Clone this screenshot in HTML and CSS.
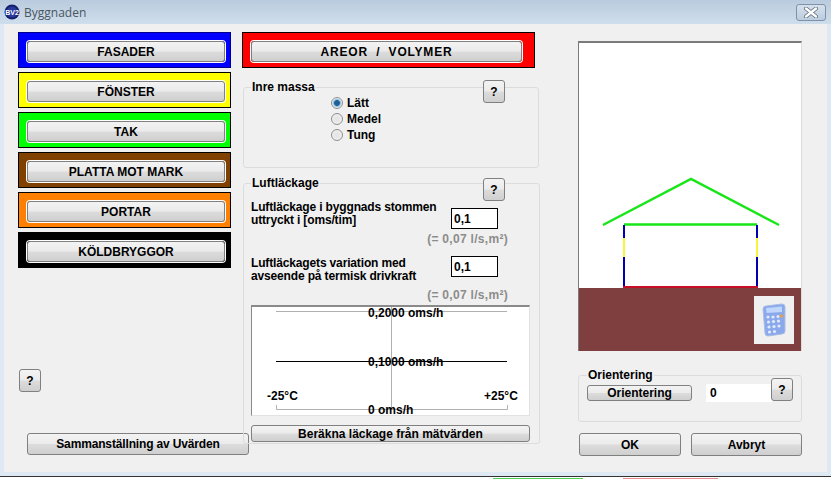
FILE: index.html
```html
<!DOCTYPE html>
<html lang="sv">
<head>
    <meta charset="UTF-8">
    <title>Byggnaden</title>
    <link rel="stylesheet" href="styles.css">
</head>
<body>
    <div class="window">
        <!-- Titelrad -->
        <div class="titlebar">
            <svg class="app-icon" width="16" height="16" viewBox="0 0 16 16">
                <circle cx="8" cy="8" r="7.5" fill="#14206e"/>
                <circle cx="8" cy="8" r="5.5" fill="#2a3a9a"/>
                <text x="8" y="10.5" font-size="7" font-weight="bold" text-anchor="middle" fill="#ffffff" font-family="Liberation Sans, sans-serif">BV2</text>
            </svg>
            <span class="title">Byggnaden</span>
            <div class="close-btn">
                <svg width="16" height="11" viewBox="0 0 16 11">
                    <path d="M3 1.5 L13 9.5 M13 1.5 L3 9.5" stroke="#5f6b78" stroke-width="4" stroke-linecap="round"/>
                    <path d="M3 1.5 L13 9.5 M13 1.5 L3 9.5" stroke="#ffffff" stroke-width="2.4" stroke-linecap="round"/>
                </svg>
            </div>
        </div>

        <div class="content">
            <!-- Vänster kolumn -->
            <div class="col-left">
                <div class="color-box blue"><button class="btn">FASADER</button></div>
                <div class="color-box yellow"><button class="btn">FÖNSTER</button></div>
                <div class="color-box green"><button class="btn">TAK</button></div>
                <div class="color-box brown"><button class="btn">PLATTA MOT MARK</button></div>
                <div class="color-box orange"><button class="btn">PORTAR</button></div>
                <div class="color-box black"><button class="btn">KÖLDBRYGGOR</button></div>
                <button class="btn help help-left">?</button>
                <button class="btn summary-btn">Sammanställning av Uvärden</button>
            </div>

            <!-- Mittenkolumn -->
            <div class="col-mid">
                <div class="color-box red"><button class="btn wide-btn">AREOR &nbsp;/&nbsp; VOLYMER</button></div>

                <fieldset class="group mass-group">
                    <legend>Inre massa</legend>
                    <button class="btn help help-corner">?</button>
                    <div class="radio-list">
                        <div class="radio-row"><span class="radio checked"></span>Lätt</div>
                        <div class="radio-row"><span class="radio"></span>Medel</div>
                        <div class="radio-row"><span class="radio"></span>Tung</div>
                    </div>
                </fieldset>

                <fieldset class="group leak-group">
                    <legend>Luftläckage</legend>
                    <button class="btn help help-corner">?</button>
                    <div class="leak-row first">
                        <div class="leak-text">Luftläckage i byggnads stommen<br>uttryckt i [oms/tim]</div>
                        <input class="field" type="text" value="0,1">
                    </div>
                    <div class="note">(= 0,07 l/s,m²)</div>
                    <div class="leak-row second">
                        <div class="leak-text">Luftläckagets variation med<br>avseende på termisk drivkraft</div>
                        <input class="field" type="text" value="0,1">
                    </div>
                    <div class="note">(= 0,07 l/s,m²)</div>

                    <!-- Diagram -->
                    <div class="chart">
                        <svg class="chart-lines" width="277" height="109" viewBox="0 0 277 109">
                            <path d="M24 4.5 H255" stroke="#b0b0b0" fill="none"/>
                            <path d="M24 54.5 H255" stroke="#000000" fill="none"/>
                            <path d="M24.5 98 V102.500 H255.500 V98" stroke="#b0b0b0" fill="none"/>
                            <path d="M139.500 0 V103" stroke="#b0b0b0" fill="none"/>
                        </svg>
                        <span class="chart-label y-top">0,2000 oms/h</span>
                        <span class="chart-label y-mid">0,1000 oms/h</span>
                        <span class="chart-label y-low">0 oms/h</span>
                        <span class="chart-label x-min">-25°C</span>
                        <span class="chart-label x-max">+25°C</span>
                    </div>
                    <button class="btn calc-leak-btn">Beräkna läckage från mätvärden</button>
                </fieldset>
            </div>

            <!-- Höger kolumn -->
            <div class="col-right">
                <div class="preview">
                    <svg width="222" height="308" viewBox="0 0 222 308">
                        <rect x="0" y="245" width="222" height="63" fill="#7f3f3f"/>
                        <path d="M24 182 L112 136 L200 182" stroke="#19e619" stroke-width="2.500" fill="none"/>
                        <path d="M45 181.500 H178" stroke="#19e619" stroke-width="2.500" fill="none"/>
                        <path d="M45 182 V244 M178 182 V244" stroke="#0000b0" stroke-width="2" fill="none"/>
                        <path d="M45 195 V214 M178 195 V214" stroke="#f5f53c" stroke-width="2" fill="none"/>
                        <path d="M44 244 H179" stroke="#c80f28" stroke-width="2" fill="none"/>
                    </svg>
                    <div class="calc-btn">
                        <svg width="24" height="34" viewBox="0 0 24 34">
                            <path d="M4 3 L20 1 Q23 1 23 4 L23 28 Q23 31 20 31 L6 33 Q3 33 3 30 L1 6 Q1 3 4 3 Z" fill="#8aa8ec" stroke="#a9bde6"/>
                            <path d="M4 5 L20 3.500 L20 9 L4.500 10 Z" fill="#c0d6fb"/>
                            <g fill="#e0eafb">
                                <circle cx="6" cy="14" r="1.600"/><circle cx="11" cy="14" r="1.600"/><circle cx="16" cy="13.500" r="1.600"/>
                                <circle cx="6.500" cy="19" r="1.600"/><circle cx="11.500" cy="18.500" r="1.600"/><circle cx="16.500" cy="18" r="1.600"/>
                                <circle cx="7" cy="24" r="1.600"/><circle cx="12" cy="23.500" r="1.600"/><circle cx="17" cy="23" r="1.600"/>
                                <circle cx="7.500" cy="29" r="1.600"/><circle cx="12.500" cy="28.500" r="1.600"/>
                            </g>
                            <circle cx="19.500" cy="13" r="1.800" fill="#e0a050"/>
                        </svg>
                    </div>
                </div>

                <fieldset class="group orient-group">
                    <legend>Orientering</legend>
                    <div class="orient-row">
                        <button class="btn orient-btn">Orientering</button>
                        <input class="field orient-field" type="text" value="0">
                        <button class="btn help orient-help">?</button>
                    </div>
                </fieldset>

                <div class="dialog-buttons">
                    <button class="btn ok-btn">OK</button>
                    <button class="btn cancel-btn">Avbryt</button>
                </div>
            </div>
        </div>
    </div>

    <!-- Det som syns av skrivbordet under fönstret -->
    <div class="desktop-strip">
        <span class="strip-green"></span>
        <span class="strip-pink"></span>
    </div>
</body>
</html>
```

FILE: styles.css
```css
/* Allmänt */
html, body {
    margin: 0;
    height: 100%;
    overflow: hidden;
}

body {
    background-color: #ffffff;
    font-family: "Liberation Sans", Arial, sans-serif;
    font-size: 12px;
    font-weight: bold;
    color: #000;
}

/* Fönster */
.window {
    box-sizing: border-box;
    height: 476px;
    background-color: #f0f0f0;
    border-left: 4px solid #dfe9f3;
    border-right: 4px solid #dfe9f3;
    border-bottom: 4px solid #dfe9f3;
}

.titlebar {
    display: flex;
    align-items: center;
    height: 24px;
    margin: 0 -4px;
    padding: 0 5px 0 4px;
    box-sizing: border-box;
    background: linear-gradient(to bottom, #b9cbde, #cfdeec);
}

.app-icon {
    margin-right: 4px;
}

.title {
    font-family: "Open Sans", sans-serif;
    font-size: 12px;
    font-weight: normal;
    color: #4a5560;
}

.close-btn {
    display: flex;
    align-items: center;
    justify-content: center;
    width: 30px;
    height: 17px;
    box-sizing: border-box;
    margin-left: auto;
    border: 1px solid #8092aa;
    border-radius: 3px;
    background: linear-gradient(to bottom, #d5e0ec, #bccddf);
}

.content {
    display: flex;
    padding: 8px 0 0 14px;
}

.col-left {
    display: flex;
    flex-direction: column;
    gap: 4px;
    width: 213px;
    flex: none;
}

.col-mid {
    width: 298px;
    flex: none;
    margin-left: 11px;
}

.col-right {
    width: 224px;
    flex: none;
    margin-left: 38px;
    padding-top: 9px;
}

/* Knappar */
.btn {
    box-sizing: border-box;
    padding: 0;
    border: 1px solid #808080;
    border-radius: 3px;
    background: linear-gradient(to bottom, #f3f3f3, #ebebeb 48%, #dcdcdc 52%, #cfcfcf);
    font: inherit;
    color: #000;
}

.help {
    width: 22px;
    height: 23px;
}

.help-left {
    margin: 97px 0 0 1px;
}

.summary-btn {
    position: relative;
    width: 222px;
    height: 22px;
    margin: 37px 0 0 9px;
    letter-spacing: -0.15px;
}

/* Färgade rutor */
.color-box {
    display: flex;
    align-items: flex-start;
    box-sizing: border-box;
    height: 36px;
    padding: 8px 0 0 8px;
    border: 1px solid #000;
}

.color-box .btn {
    width: 198px;
    height: 21px;
    box-shadow: 0 0 0 1px #ffffff;
}

.blue { background-color: #0000ff; border-color: #00008c; }
.yellow { background-color: #ffff00; }
.green { background-color: #00ff00; }
.brown { background-color: #804000; }
.orange { background-color: #ff8000; }
.black { background-color: #000000; }
.red { background-color: #ff0000; width: 293px; }

.color-box .wide-btn {
    width: 271px;
    letter-spacing: 0.8px;
}

/* Grupper */
.group {
    position: relative;
    box-sizing: border-box;
    min-width: 0;
    margin: 0;
    padding: 0 0 0 7px;
    border: 1px solid #dcdcdc;
    border-radius: 3px;
}

.group legend {
    padding: 0 1px;
    line-height: 14px;
}

.help-corner {
    position: absolute;
    left: 239px;
}

.mass-group .help-corner {
    top: -14px;
}

.leak-group .help-corner {
    top: -12px;
}

.mass-group {
    height: 88px;
    margin-top: 12px;
    margin-left: 1px;
    width: 296px;
}

.leak-group {
    height: 268px;
    margin-top: 8px;
    margin-left: 1px;
}

.radio-list {
    padding: 1px 0 0 80px;
}

.radio-row {
    display: flex;
    align-items: center;
    height: 16px;
}

.radio {
    box-sizing: border-box;
    width: 12px;
    height: 12px;
    margin-right: 4px;
    border: 1px solid #8e8f8f;
    border-radius: 50%;
    background: radial-gradient(circle, #e6e6e6 30%, #f6f6f6);
}

.radio.checked {
    background: radial-gradient(circle, #1f5f96 35%, #7fb2d8 45%, #f2f6fa 70%);
}

/* Luftläckage */
.leak-row {
    display: flex;
    align-items: flex-start;
    height: 26px;
}

.leak-row.first {
    height: 29px;
    margin-top: 10px;
}

.leak-row.second {
    margin-top: 10px;
}

.leak-text {
    width: 200px;
    padding-top: 1px;
    line-height: 13px;
    letter-spacing: -0.15px;
}

.first .field {
    margin-top: 8px;
}

.field {
    box-sizing: border-box;
    width: 47px;
    height: 21px;
    padding: 0 2px;
    border: 1px solid #000;
    background-color: #fff;
    font: inherit;
}

.note {
    width: 257px;
    margin-top: 3px;
    line-height: 14px;
    text-align: right;
    letter-spacing: 0.3px;
    color: #8c8c8c;
}

.second + .note {
    margin-top: 6px;
}

/* Diagram */
.chart {
    position: relative;
    box-sizing: border-box;
    width: 279px;
    height: 111px;
    margin-top: 3px;
    background-color: #ffffff;
    border-top: 2px solid #8a8a8a;
    border-left: 1px solid #8a8a8a;
    border-right: 1px solid #e2e2e2;
    border-bottom: 1px solid #e2e2e2;
}

.chart-lines {
    display: block;
}

.chart-label {
    position: absolute;
    line-height: 14px;
    white-space: nowrap;
}

.y-top { top: -1px; left: 116px; }
.y-mid { top: 48px; left: 116px; }
.y-low { top: 96px; left: 116px; }
.x-min { top: 82px; left: 15px; }
.x-max { top: 82px; left: 232px; }

.calc-leak-btn {
    display: block;
    width: 279px;
    height: 17px;
    margin-top: 9px;
}

/* Förhandsvisning */
.preview {
    position: relative;
    box-sizing: border-box;
    width: 224px;
    height: 310px;
    background-color: #fff;
    border-top: 2px solid #7a7a7a;
    border-left: 1px solid #7a7a7a;
    border-right: 1px solid #dcdcdc;
}

.preview svg {
    display: block;
}

.calc-btn {
    position: absolute;
    right: 7px;
    bottom: 7px;
    display: flex;
    align-items: center;
    justify-content: center;
    width: 40px;
    height: 48px;
    background-color: #f0f0f0;
}

/* Orientering */
.orient-group {
    height: 54px;
    margin-top: 17px;
    padding-left: 8px;
}

.orient-row {
    display: flex;
    align-items: flex-start;
    padding-top: 3px;
}

.orient-btn {
    width: 105px;
    height: 16px;
    margin-right: 14px;
}

.orient-field {
    width: 66px;
    height: 18px;
    margin-top: -1px;
    padding-left: 4px;
    border: none;
}

.orient-help {
    margin: -7px 0 0 -1px;
}

.dialog-buttons {
    display: flex;
    gap: 10px;
    margin-top: 11px;
    padding-left: 1px;
}

.ok-btn {
    width: 102px;
    height: 23px;
}

.cancel-btn {
    width: 111px;
    height: 23px;
}

/* Skrivbordet under fönstret */
.desktop-strip {
    position: relative;
    height: 3px;
    border-top: 1px solid #333;
}

.desktop-strip span {
    position: absolute;
    top: 1px;
    height: 2px;
}

.strip-green {
    left: 493px;
    width: 90px;
    background-color: #4fd04f;
}

.strip-pink {
    left: 623px;
    width: 95px;
    background-color: #e88a90;
}
```
